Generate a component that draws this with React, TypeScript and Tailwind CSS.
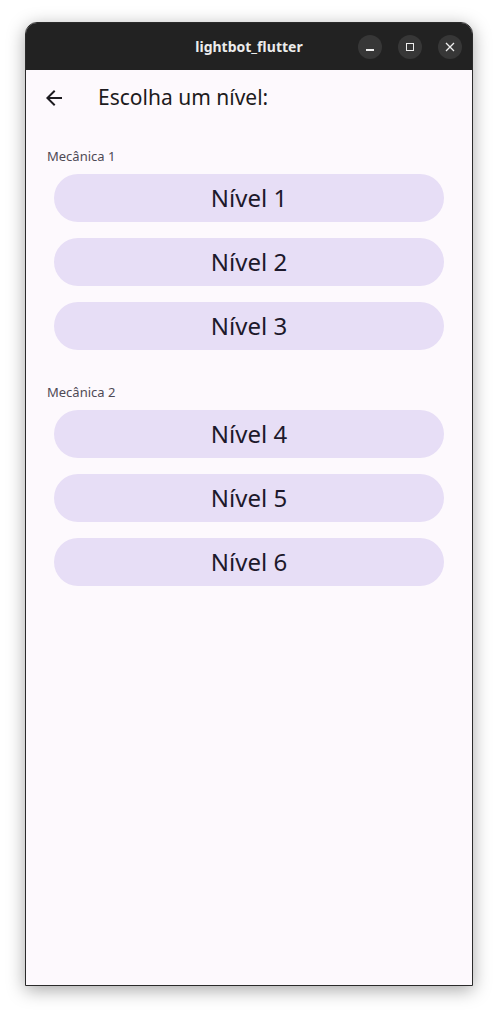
import React from "react";

const font = { fontFamily: '"Noto Sans", "Open Sans", sans-serif' };

function LevelButton({ label }: { label: string }) {
  return (
    <button className="h-[48px] w-full rounded-full bg-[#e7def6] text-[24px] text-[#1d192b] flex items-center justify-center leading-none">
      {label}
    </button>
  );
}

function Section({ title, levels }: { title: string; levels: string[] }) {
  return (
    <div className="flex flex-col">
      <div className="pl-[21px] text-[13px] leading-[18px] text-[#4f4a55] h-[18px]">{title}</div>
      <div className="flex flex-col gap-[16px] px-[28px] mt-[9px]">
        {levels.map((l) => (
          <LevelButton key={l} label={l} />
        ))}
      </div>
    </div>
  );
}

export default function App() {
  return (
    <div className="w-[498px] h-[1014px] bg-white pt-[22px] pl-[25px]" style={font}>
      <div className="w-[448px] h-[964px] rounded-t-[12px] border border-[#2b2b2b] shadow-[0_4px_18px_rgba(0,0,0,0.35)] overflow-hidden flex flex-col bg-[#fdf9fd]">
        <div className="h-[47px] bg-[#222222] relative flex items-center justify-center shrink-0">
          <span className="text-[14px] font-bold text-[#ececec]">lightbot_flutter</span>
          <div className="absolute right-[10px] top-[12px] flex gap-[16px]">
            <div className="w-[24px] h-[24px] rounded-full bg-[#373737] flex items-center justify-center">
              <div className="w-[8px] h-[1.5px] bg-[#eeeeee] mt-[6px]" />
            </div>
            <div className="w-[24px] h-[24px] rounded-full bg-[#373737] flex items-center justify-center">
              <div className="w-[8px] h-[8px] border border-[#eeeeee]" />
            </div>
            <div className="w-[24px] h-[24px] rounded-full bg-[#373737] flex items-center justify-center">
              <svg width="10" height="10" viewBox="0 0 10 10">
                <path d="M1 1 L9 9 M9 1 L1 9" stroke="#eeeeee" strokeWidth="1.3" />
              </svg>
            </div>
          </div>
        </div>
        <div className="flex-1 flex flex-col">
          <div className="h-[56px] flex items-center">
            <div className="w-[56px] flex items-center justify-center">
              <svg width="24" height="24" viewBox="0 0 24 24">
                <path d="M20 11H7.83l5.59-5.59L12 4l-8 8 8 8 1.41-1.41L7.83 13H20v-2z" fill="#1d1b20" />
              </svg>
            </div>
            <span className="ml-[16px] text-[21px] text-[#1d1b20]">Escolha um nível:</span>
          </div>
          <div className="mt-[21px] flex flex-col gap-[33px]">
            <Section title="Mecânica 1" levels={["Nível 1", "Nível 2", "Nível 3"]} />
            <Section title="Mecânica 2" levels={["Nível 4", "Nível 5", "Nível 6"]} />
          </div>
        </div>
      </div>
    </div>
  );
}
